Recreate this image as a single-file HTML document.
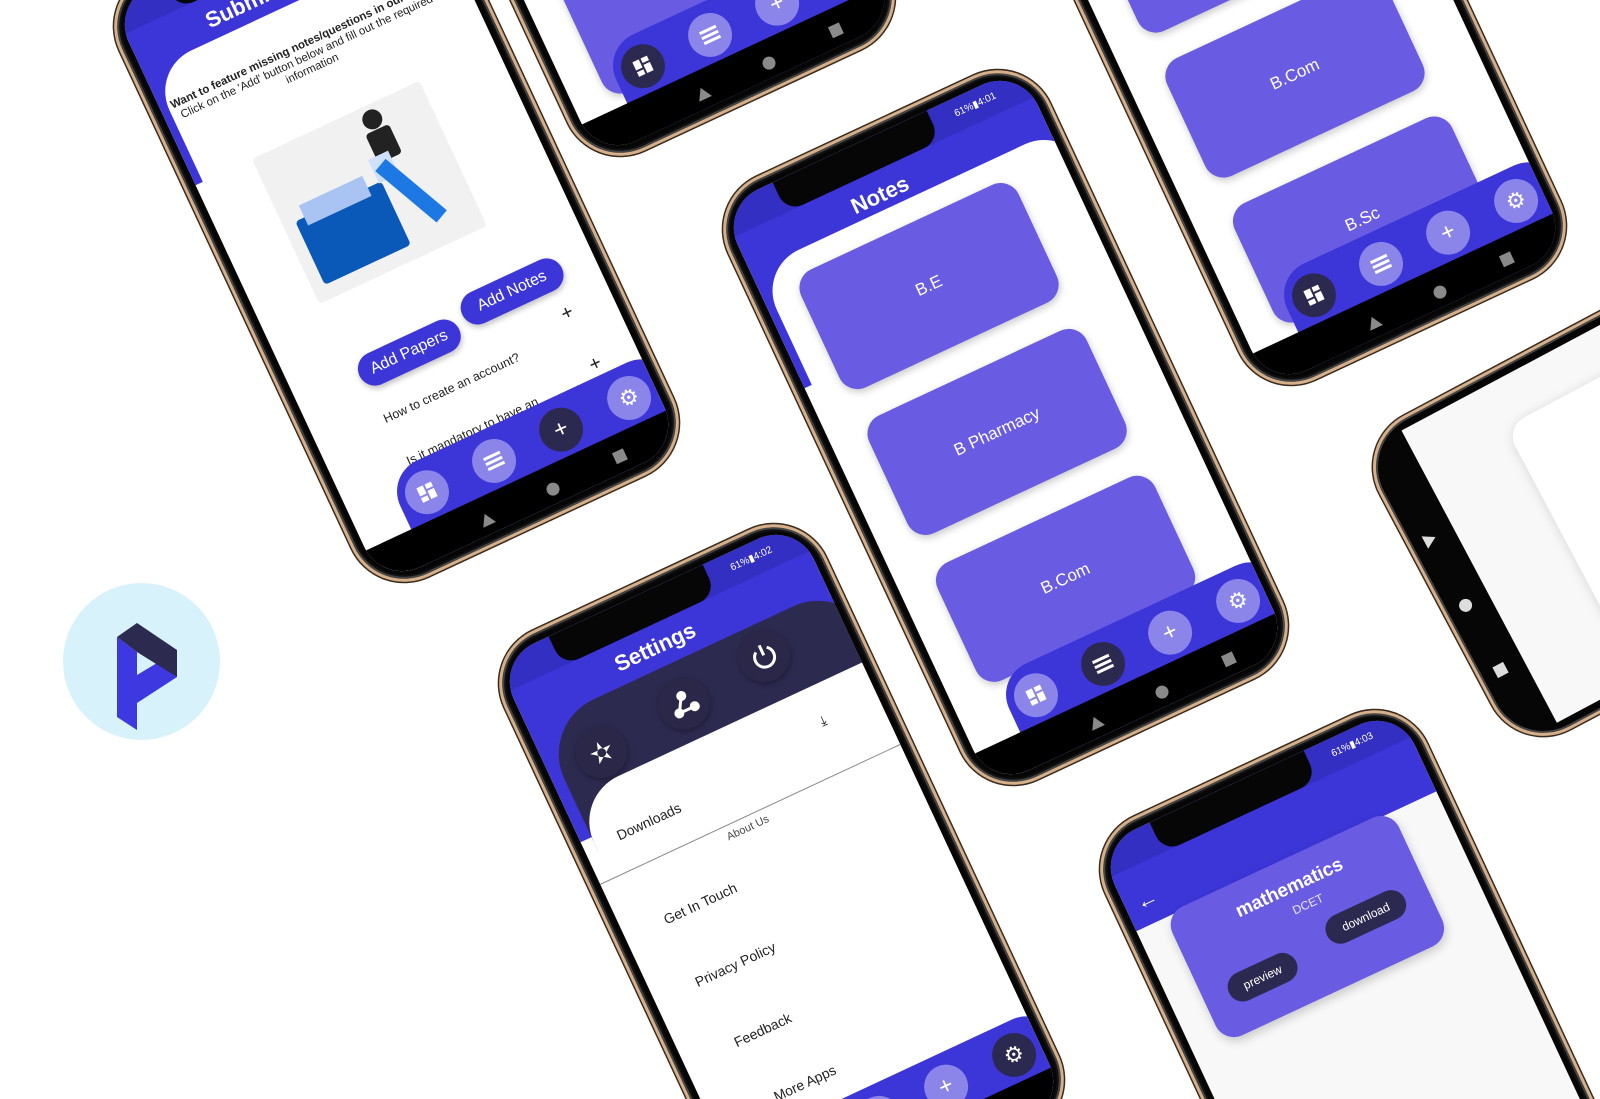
<!DOCTYPE html>
<html style="width:1600px;height:1099px;overflow:hidden"><head><meta charset="utf-8">
<style>
*{margin:0;padding:0;box-sizing:border-box}
body{width:1600px;height:1099px;background:#fff;overflow:hidden;font-family:"Liberation Sans","DejaVu Sans",sans-serif}
#w{position:relative;width:1600px;height:1099px;overflow:hidden}
.ph{position:absolute;width:355px;height:665px;border-radius:58px;background:#060606;border:3px solid #d6b08a;box-shadow:0 0 0 1.5px #3b2c1e,inset 0 0 0 2px #444,inset 0 0 0 4px #111;transform:rotate(-25deg)}
.sc{position:absolute;left:9px;top:9px;width:331px;height:641px;border-radius:42px;overflow:hidden;background:#fff}
.hdr{position:absolute;left:0;top:0;width:100%;height:200px;background:#3c36d9}
.stat{position:absolute;left:0;top:0;width:100%;height:33px;background:#332fc2}
.notch{position:absolute;left:58px;top:0;width:170px;height:33px;background:#060606;border-radius:0 0 18px 18px;z-index:5}
.st{position:absolute;top:10px;right:34px;color:#fff;font-size:10px}
.panel{position:absolute;left:8px;top:72px;width:340px;height:700px;background:#fff;border-radius:45px 45px 0 0}
.title{position:absolute;left:0;width:300px;text-align:center;color:#fff;font-weight:bold;font-size:22px}
.card{position:absolute;left:36px;width:240px;height:130px;border-radius:20px;background:#6a5be3;color:#fff;font-size:17px;display:flex;align-items:center;justify-content:center;box-shadow:0 3px 8px rgba(0,0,0,.22)}
.bar{position:absolute;left:50px;top:543px;width:300px;height:110px;background:#3c36d9;border-radius:34px 34px 0 0}
.nav{position:absolute;left:0;top:603px;width:100%;height:40px;background:#000}
.c{position:absolute;top:554px;width:44px;height:44px;border-radius:50%;background:#8b85ea;color:#fff;font-size:24px;display:flex;align-items:center;justify-content:center;line-height:1}
.c.d{background:#2c2950}
.tri{position:absolute;top:620px;left:116px;width:0;height:0;border-left:7px solid transparent;border-right:7px solid transparent;border-bottom:12px solid #8a8a8a}
.dot{position:absolute;top:620px;left:189px;width:13px;height:13px;border-radius:50%;background:#8a8a8a}
.sq{position:absolute;top:619px;left:264px;width:12px;height:12px;background:#8a8a8a}
.t{position:absolute;white-space:nowrap}
.ic{position:absolute;width:52px;height:52px;border-radius:50%;background:#2a2748;box-shadow:0 2px 6px rgba(0,0,0,.35);color:#fff;display:flex;align-items:center;justify-content:center;font-size:28px}
</style></head><body><div id="w">

<div style="position:absolute;left:63px;top:583px;width:157px;height:157px;border-radius:50%;background:#d8f2fc"></div>
<svg style="position:absolute;left:0;top:0" width="300" height="800">
<polygon points="117,637 137,652 137,675 157,663 177,677 137,703 137,730 117,717" fill="#3e38e0"/>
<polygon points="117,637 137,623 177,650 177,677 137,652" fill="#2c2a4e"/>
</svg>

<div class="ph" style="left:435px;top:-534px"><div class="sc">
<div class="card" style="top:303px"></div>
<div class="card" style="top:463px"></div>
<div class="bar"></div><div class="nav"></div>
<div class="c d" style="left:58px"><svg width="18" height="18" viewBox="0 0 18 18" fill="#fff"><rect x="1" y="1" width="7" height="9"/><rect x="10" y="1" width="7" height="5"/><rect x="1" y="12" width="7" height="5"/><rect x="10" y="8" width="7" height="9"/></svg></div>
<div class="c" style="left:132px"><svg width="20" height="16" viewBox="0 0 20 16" fill="#fff"><rect x="1" y="1" width="18" height="3"/><rect x="1" y="6.5" width="18" height="3"/><rect x="1" y="12" width="18" height="3"/></svg></div>
<div class="c" style="left:206px">+</div><div class="c" style="left:281px;font-size:22px">⚙</div>
<div class="tri"></div><div class="dot"></div><div class="sq"></div>
</div></div>

<div class="ph" style="left:1106px;top:-305px"><div class="sc">
<div class="card" style="top:143px">B Pharmacy</div>
<div class="card" style="top:303px">B.Com</div>
<div class="card" style="top:463px">B.Sc</div>
<div class="bar"></div><div class="nav"></div>
<div class="c d" style="left:58px"><svg width="18" height="18" viewBox="0 0 18 18" fill="#fff"><rect x="1" y="1" width="7" height="9"/><rect x="10" y="1" width="7" height="5"/><rect x="1" y="12" width="7" height="5"/><rect x="10" y="8" width="7" height="9"/></svg></div>
<div class="c" style="left:132px"><svg width="20" height="16" viewBox="0 0 20 16" fill="#fff"><rect x="1" y="1" width="18" height="3"/><rect x="1" y="6.5" width="18" height="3"/><rect x="1" y="12" width="18" height="3"/></svg></div>
<div class="c" style="left:206px">+</div><div class="c" style="left:281px;font-size:22px">⚙</div>
<div class="tri"></div><div class="dot"></div><div class="sq"></div>
</div></div>

<div class="ph" style="left:219px;top:-108px"><div class="sc">
<div class="hdr"></div><div class="stat"></div><div class="notch"></div>
<div class="panel" style="top:76px"></div>
<div class="title" style="top:44px;left:0">Submit Notes</div>
<div class="t" style="top:112px;left:5px;width:300px;text-align:center;font-size:11.5px;color:#222;line-height:13px;white-space:normal"><b>Want to feature missing notes/questions in our app?</b><br>Click on the 'Add' button below and fill out the required information</div>
<div style="position:absolute;top:200px;left:62px;width:185px;height:160px;background:#f1f1f1;border-radius:4px"></div>
<div style="position:absolute;top:275px;left:75px;width:95px;height:70px;background:#0a58b8;border-radius:4px"></div>
<div style="position:absolute;top:262px;left:85px;width:70px;height:22px;background:#a9c4f2"></div>
<div style="position:absolute;top:205px;left:178px;width:20px;height:20px;border-radius:50%;background:#222"></div>
<div style="position:absolute;top:226px;left:175px;width:26px;height:32px;background:#222;border-radius:4px"></div>
<div style="position:absolute;top:250px;left:167px;width:22px;height:26px;background:#cfe0fb"></div>
<div style="position:absolute;top:256px;left:185px;width:16px;height:80px;background:#1e78e3;transform:rotate(-25deg)"></div>
<div class="t" style="top:425px;left:68px;width:110px;height:34px;border-radius:17px;background:#3c36d9;color:#fff;font-size:16px;text-align:center;line-height:34px;box-shadow:0 3px 6px rgba(0,0,0,.25)">Add Papers</div>
<div class="t" style="top:413px;left:187px;width:110px;height:34px;border-radius:17px;background:#3c36d9;color:#fff;font-size:16px;text-align:center;line-height:34px;box-shadow:0 3px 6px rgba(0,0,0,.25)">Add Notes</div>
<div class="t" style="top:485px;left:72px;font-size:12.5px;color:#222">How to create an account?</div>
<div class="t" style="top:462px;left:277px;font-size:20px;color:#222">+</div>
<div class="t" style="top:533px;left:75px;font-size:12.5px;color:#222">Is it mandatory to have an</div>
<div class="t" style="top:520px;left:281px;font-size:20px;color:#222">+</div>
<div class="bar"></div><div class="nav"></div>
<div class="c" style="left:58px"><svg width="18" height="18" viewBox="0 0 18 18" fill="#fff"><rect x="1" y="1" width="7" height="9"/><rect x="10" y="1" width="7" height="5"/><rect x="1" y="12" width="7" height="5"/><rect x="10" y="8" width="7" height="9"/></svg></div>
<div class="c" style="left:132px"><svg width="20" height="16" viewBox="0 0 20 16" fill="#fff"><rect x="1" y="1" width="18" height="3"/><rect x="1" y="6.5" width="18" height="3"/><rect x="1" y="12" width="18" height="3"/></svg></div>
<div class="c d" style="left:206px">+</div><div class="c" style="left:281px;font-size:22px">⚙</div>
<div class="tri"></div><div class="dot"></div><div class="sq"></div>
</div></div>

<div class="ph" style="left:828px;top:95px"><div class="sc">
<div class="hdr"></div><div class="stat"></div><div class="notch"></div>
<div class="st">61%▮4:01</div>
<div class="panel"></div>
<div class="title" style="top:44px">Notes</div>
<div class="card" style="top:95px">B.E</div>
<div class="card" style="top:256px">B Pharmacy</div>
<div class="card" style="top:418px">B.Com</div>
<div class="bar"></div><div class="nav"></div>
<div class="c" style="left:58px"><svg width="18" height="18" viewBox="0 0 18 18" fill="#fff"><rect x="1" y="1" width="7" height="9"/><rect x="10" y="1" width="7" height="5"/><rect x="1" y="12" width="7" height="5"/><rect x="10" y="8" width="7" height="9"/></svg></div>
<div class="c d" style="left:132px"><svg width="20" height="16" viewBox="0 0 20 16" fill="#fff"><rect x="1" y="1" width="18" height="3"/><rect x="1" y="6.5" width="18" height="3"/><rect x="1" y="12" width="18" height="3"/></svg></div>
<div class="c" style="left:206px">+</div><div class="c" style="left:281px;font-size:22px">⚙</div>
<div class="tri"></div><div class="dot"></div><div class="sq"></div>
</div></div>

<div class="ph" style="left:604px;top:549px"><div class="sc">
<div class="hdr"></div><div class="stat"></div><div class="notch"></div>
<div class="st">61%▮4:02</div>
<div class="title" style="top:42px">Settings</div>
<div style="position:absolute;top:76px;left:12px;width:340px;height:140px;background:#2d2a50;border-radius:60px 60px 0 0"></div>
<div class="ic" style="left:31px;top:101px">✫</div>
<div class="ic" style="left:126px;top:92px"><svg width="30" height="30" viewBox="0 0 30 30" fill="#fff" stroke="#fff" stroke-width="3"><line x1="7" y1="22" x2="16" y2="7"/><line x1="7" y1="22" x2="24" y2="22"/><circle cx="16" cy="7" r="3.5"/><circle cx="7" cy="22" r="3.5"/><circle cx="24" cy="22" r="3.5"/></svg></div>
<div class="ic" style="left:219px;top:83px"><svg width="30" height="30" viewBox="0 0 30 30" fill="none" stroke="#fff" stroke-width="3"><path d="M9 8 A10 10 0 1 0 21 8"/><line x1="15" y1="3" x2="15" y2="14"/></svg></div>
<div style="position:absolute;top:156px;left:12px;width:330px;height:500px;background:#fff;border-radius:50px 0 0 0"></div>
<div class="t" style="top:184px;left:268px;font-size:14px;color:#222">⤓</div>
<div class="t" style="top:202px;left:36px;font-size:14px;color:#222">Downloads</div>
<div style="position:absolute;top:246px;left:0;width:331px;height:1px;background:#8a8a8a"></div>
<div class="t" style="top:252px;left:135px;font-size:11px;color:#444">About Us</div>
<div class="t" style="top:298px;left:43px;font-size:14px;color:#222">Get In Touch</div>
<div class="t" style="top:368px;left:45px;font-size:14px;color:#222">Privacy Policy</div>
<div class="t" style="top:439px;left:55px;font-size:14px;color:#222">Feedback</div>
<div class="t" style="top:505px;left:68px;font-size:14px;color:#222">More Apps</div>
<div class="bar"></div><div class="nav"></div>
<div class="c" style="left:58px"><svg width="18" height="18" viewBox="0 0 18 18" fill="#fff"><rect x="1" y="1" width="7" height="9"/><rect x="10" y="1" width="7" height="5"/><rect x="1" y="12" width="7" height="5"/><rect x="10" y="8" width="7" height="9"/></svg></div>
<div class="c" style="left:132px"><svg width="20" height="16" viewBox="0 0 20 16" fill="#fff"><rect x="1" y="1" width="18" height="3"/><rect x="1" y="6.5" width="18" height="3"/><rect x="1" y="12" width="18" height="3"/></svg></div>
<div class="c" style="left:206px">+</div><div class="c d" style="left:281px;font-size:22px">⚙</div>
<div class="tri"></div><div class="dot"></div><div class="sq"></div>
</div></div>

<div class="ph" style="left:1205px;top:735px"><div class="sc" style="background:#f8f8f8">
<div class="hdr" style="height:93px"></div><div class="stat"></div><div class="notch"></div>
<div class="st">61%▮4:03</div>
<div class="t" style="top:56px;left:12px;color:#fff;font-size:22px">←</div>
<div style="position:absolute;top:90px;left:32px;width:250px;height:142px;border-radius:20px;background:#6a5be3;box-shadow:0 4px 10px rgba(0,0,0,.2)"></div>
<div class="t" style="top:108px;left:32px;width:250px;text-align:center;color:#fff;font-size:19px;font-weight:bold">mathematics</div>
<div class="t" style="top:134px;left:42px;width:250px;text-align:center;color:#e8e6ff;font-size:12px">DCET</div>
<div class="t" style="top:173px;left:58px;width:74px;height:30px;border-radius:15px;background:#2c2950;color:#fff;font-size:12px;text-align:center;line-height:30px">preview</div>
<div class="t" style="top:162px;left:171px;width:86px;height:30px;border-radius:15px;background:#2c2950;color:#fff;font-size:12px;text-align:center;line-height:30px">download</div>
</div></div>

<div style="position:absolute;left:1397px;top:266px;width:665px;height:355px;border-radius:58px;background:#060606;border:3px solid #d6b08a;box-shadow:0 0 0 1.5px #3b2c1e,inset 0 0 0 2px #444;transform:rotate(-28deg)">
<div style="position:absolute;left:46px;top:9px;width:606px;height:331px;background:#f8f8f8;border-radius:0 42px 42px 0;overflow:hidden">
<div style="position:absolute;left:93px;top:46px;width:400px;height:260px;background:#fff;border-radius:22px;box-shadow:0 2px 12px rgba(0,0,0,.15)"></div></div>
<div style="position:absolute;left:14px;top:112px;width:0;height:0;border-top:7px solid transparent;border-bottom:7px solid transparent;border-left:12px solid #ddd"></div>
<div style="position:absolute;left:14px;top:187px;width:13px;height:13px;border-radius:50%;background:#ddd"></div>
<div style="position:absolute;left:15px;top:261px;width:12px;height:12px;background:#ddd"></div>
</div>

</div></body></html>
